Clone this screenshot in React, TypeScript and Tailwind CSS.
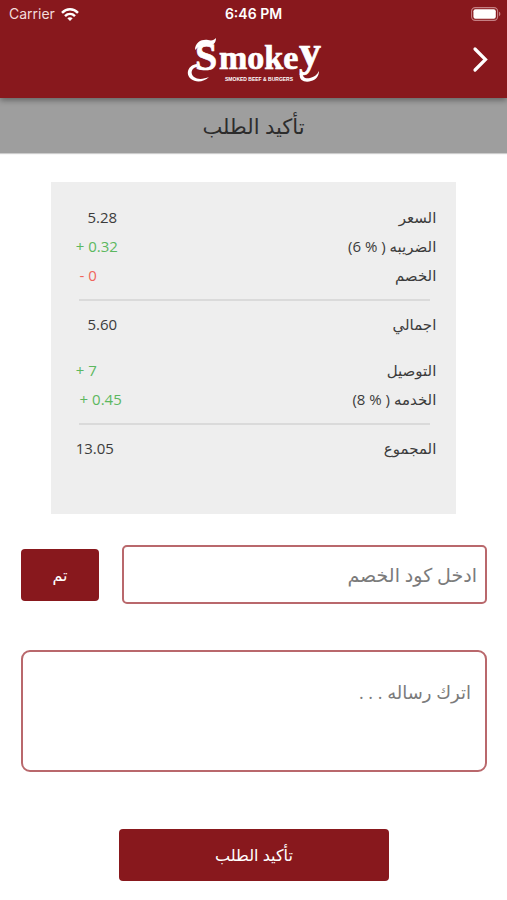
interface SummaryRowProps {
  label: string;
  value: string;
  tone?: "plain" | "plus" | "minus";
}

const toneClasses = {
  plain: "text-[#3c3c3c]",
  plus: "text-[#5cb860]",
  minus: "text-[#f0655c]",
};

function SummaryRow({ label, value, tone = "plain" }: SummaryRowProps) {
  return (
    <div className="flex h-[29px] items-center justify-between">
      <dt className="text-[#3c3c3c]">{label}</dt>
      <dd dir="ltr" className={`whitespace-pre ${toneClasses[tone]}`}>
        {value}
      </dd>
    </div>
  );
}

function Divider() {
  return <hr className="my-[9px] mr-[6px] ml-[3px] border-t-2 border-[#dadada]" />;
}

function StatusBar() {
  return (
    <div
      dir="ltr"
      className="grid h-7 grid-cols-3 items-center px-[9px] font-['Inter',sans-serif] text-sm text-white"
    >
      <div className="flex items-center gap-[6px] text-[#f3dcdc]">
        <span>Carrier</span>
        <svg viewBox="0 0 18 13" className="h-[13px] w-[18px]" aria-hidden="true">
          <g fill="none" stroke="#fff" strokeWidth="2.5">
            <path d="M1 4.8C5.6.2 12.4.2 17 4.8" />
            <path d="M4 8.1c2.9-2.8 7.1-2.8 10 0" />
          </g>
          <path d="M6.3 10.3c1.6-1.4 3.8-1.4 5.4 0L9 13z" fill="#fff" />
        </svg>
      </div>
      <span className="text-center font-semibold">6:46 PM</span>
      <svg viewBox="0 0 30 14" className="-mr-[3px] h-[14px] w-[30px] justify-self-end" aria-hidden="true">
        <rect x="0.6" y="0.6" width="26" height="12.8" rx="3.6" fill="none" stroke="#c58084" strokeWidth="1.1" />
        <rect x="2.4" y="2.3" width="22.4" height="9.4" rx="2" fill="#fff" />
        <path d="M28 4.8c1.8.6 1.8 3.8 0 4.4z" fill="#c58084" />
      </svg>
    </div>
  );
}

function Logo() {
  return (
    <svg
      viewBox="0 0 134 46"
      direction="ltr"
      className="h-[46px] w-[134px] overflow-visible"
      role="img"
      aria-label="Smokey"
    >
      <text
        x="8"
        y="33"
        fill="#fff"
        stroke="#fff"
        strokeWidth="0.7"
        fontSize="40"
        fontFamily="'Liberation Serif', serif"
        fontWeight="700"
      >
        S
        <tspan x="32" y="32" fontSize="34">moke</tspan>
        <tspan x="112" y="29" fontSize="44">y</tspan>
      </text>
      {/* swashes on the first and last letters */}
      <path
        d="M10 27C1 28 -2 37 4 42c5 4 13 3 18-2-5 2-11 3-15 0-4-3-3-9 3-10z"
        fill="#fff"
      />
      <path d="M8 13C8 5 15 2 21 3c4 1 6 0 8-2 0 6-4 8-8 7-5-1-9 1-13 5z" fill="#fff" />
      <path d="M113 36c-2 8 6 10 11 8 5-1 8-5 8-10-2 4-5 6-9 7-5 1-8-1-7-5z" fill="#fff" />
      <text
        x="38"
        y="44"
        fill="#fff"
        fontSize="5"
        fontWeight="700"
        fontFamily="'Liberation Sans', sans-serif"
      >
        SMOKED BEEF &amp; BURGERS
      </text>
    </svg>
  );
}

export default function App() {
  return (
    <div
      dir="rtl"
      lang="ar"
      className="min-h-screen bg-white font-['Open_Sans','DejaVu_Sans',sans-serif] text-base text-[#3c3c3c]"
    >
      <header className="relative bg-[#88181d] shadow-[0_2px_6px_rgba(0,0,0,0.4)]">
        <StatusBar />
        <div className="grid h-[70px] grid-cols-[1fr_auto_1fr] items-center px-3 pb-[6px]">
          <button type="button" aria-label="رجوع" className="justify-self-start text-white">
            <svg viewBox="0 0 28 28" className="size-7" fill="none" aria-hidden="true">
              <path d="M8 3 18.5 13.5 8 24" stroke="currentColor" strokeWidth="3.2" strokeLinecap="round" />
            </svg>
          </button>
          <Logo />
        </div>
      </header>

      <h1 className="flex h-[55px] items-center justify-center bg-[#9e9e9e] pt-[2px] text-[21px] text-[#2c2c2c] shadow-[0_1px_1px_rgba(0,0,0,0.2)]">
        تأكيد الطلب
      </h1>

      <main className="pt-[29px] pb-5">
        <dl className="mx-[10%] bg-[#eeeeee] pt-[21px] pr-5 pb-[51px] pl-[25px] text-[15px]">
          <SummaryRow label="السعر" value="   5.28" />
          <SummaryRow label="الضريبه ( % 6)" value="+ 0.32" tone="plus" />
          <SummaryRow label="الخصم" value=" - 0" tone="minus" />
          <Divider />
          <div className="mb-[17px]">
            <SummaryRow label="اجمالي" value="   5.60" />
          </div>
          <SummaryRow label="التوصيل" value="+ 7" tone="plus" />
          <SummaryRow label="الخدمه ( % 8)" value=" + 0.45" tone="plus" />
          <Divider />
          <SummaryRow label="المجموع" value="13.05" />
        </dl>

        <form className="mt-[31px] pr-5 pl-[21px]" onSubmit={(e) => e.preventDefault()}>
          <div className="flex items-center gap-[23px]">
            <input
              type="text"
              aria-label="ادخل كود الخصم"
              placeholder="ادخل كود الخصم"
              className="h-[59px] min-w-0 flex-1 rounded-[5px] border-2 border-[#b9686c] px-2 text-[19px] placeholder:text-[#7b7b7b]"
            />
            <button type="button" className="h-[52px] w-[78px] rounded-[4px] bg-[#88181d] text-base text-white">
              تم
            </button>
          </div>
          <textarea
            aria-label="اترك رساله"
            placeholder="اترك رساله . . ."
            className="mt-[46px] block h-[122px] w-full resize-none rounded-[9px] border-2 border-[#b9686c] px-[14px] pt-[26px] text-lg placeholder:text-[#7b7b7b]"
          />
          <button
            type="submit"
            className="mx-auto mt-[57px] block h-[52px] w-[58%] rounded-[4px] bg-[#88181d] text-base text-white"
          >
            تأكيد الطلب
          </button>
        </form>
      </main>
    </div>
  );
}
